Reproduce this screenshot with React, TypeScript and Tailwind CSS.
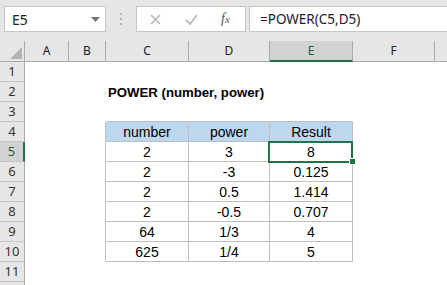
import { Fragment } from 'react';

const cols = [
  { id: 'A', w: 'w-[44px]' },
  { id: 'B', w: 'w-[37px]' },
  { id: 'C', w: 'w-[83px]' },
  { id: 'D', w: 'w-[81px]' },
  { id: 'E', w: 'w-[83px]' },
  { id: 'F', w: 'w-[82px]' },
  { id: '', w: 'w-[60px]' },
];

const table = [
  ['2', '3', '8'],
  ['2', '-3', '0.125'],
  ['2', '0.5', '1.414'],
  ['2', '-0.5', '0.707'],
  ['64', '1/3', '4'],
  ['625', '1/4', '5'],
];

const Cell = ({ w, text, kind, right, bottom, children }: { w: string; text?: string; kind?: 'head' | 'body'; right?: boolean; bottom?: boolean; children?: React.ReactNode }) => (
  <div
    className={`relative ${w} h-[20px] shrink-0 flex items-center justify-center border-r border-b ${
      right ? 'border-r-[#bfbfbf]' : 'border-r-white'
    } ${bottom ? 'border-b-[#bfbfbf]' : 'border-b-white'} ${kind === 'head' ? 'bg-[#bdd7ee]' : 'bg-white'}`}
  >
    <span className="text-[14px] text-black leading-none pt-[1px]">{text}</span>
    {children}
  </div>
);

export default function App() {
  const rows = Array.from({ length: 11 }, (_, i) => i + 1);

  return (
    <div className="w-[447px] h-[285px] overflow-hidden bg-white font-['Liberation_Sans',sans-serif]">
      {/* formula bar */}
      <div className="h-[41px] bg-[#e6e6e6] flex items-start pt-[6px] pl-[4px] gap-0">
        <div className="w-[102px] h-[26px] bg-white border border-[#c6c6c6] flex items-center justify-between pl-[7px] pr-[5px]">
          <span className="text-[14px] text-[#222] font-['Noto_Sans',sans-serif]">E5</span>
          <svg width="9" height="5" viewBox="0 0 9 5"><path d="M0 0h9L4.5 5z" fill="#777" /></svg>
        </div>
        <div className="w-[30px] h-[26px] flex flex-col items-center justify-center gap-[3px]">
          <span className="w-[2px] h-[2px] bg-[#b5b5b5]" />
          <span className="w-[2px] h-[2px] bg-[#b5b5b5]" />
          <span className="w-[2px] h-[2px] bg-[#b5b5b5]" />
        </div>
        <div className="w-[110px] h-[26px] bg-white border border-[#c6c6c6] flex items-center">
          <svg className="ml-[13px]" width="11" height="11" viewBox="0 0 11 11"><path d="M1 1l9 9M10 1l-9 9" stroke="#b8b8b8" strokeWidth="1.5" /></svg>
          <svg className="ml-[24px]" width="13" height="11" viewBox="0 0 13 11"><path d="M1 6l4 4 7-9" stroke="#b8b8b8" strokeWidth="1.8" fill="none" /></svg>
          <span className="ml-[23px] text-[14px] italic text-[#555] font-['Liberation_Serif',serif] leading-none">
            f<span className="text-[11px]">x</span>
          </span>
        </div>
        <div className="ml-[3px] flex-1 h-[26px] bg-white border border-[#c6c6c6] border-r-0 flex items-center pl-[10px]">
          <span className="text-[13.5px] text-[#222] font-['Noto_Sans',sans-serif]">=POWER(C5,D5)</span>
        </div>
      </div>

      {/* column headers */}
      <div className="flex h-[21px] bg-[#e6e6e6] font-['Noto_Sans',sans-serif]">
        <div className="relative w-[25px] h-[21px] shrink-0 border-r border-b border-[#ababab]">
          <svg className="absolute left-[10px] top-[6px]" width="12" height="12" viewBox="0 0 12 12"><path d="M12 0v12H0z" fill="#b4b4b4" /></svg>
        </div>
        {cols.map((c, i) =>
          c.id === 'E' ? (
            <div key={i} className={`${c.w} h-[21px] shrink-0 bg-[#d2d2d2] border-r border-r-[#ababab] border-b-2 border-b-[#217346] flex items-center justify-center text-[12px] text-[#1f5d3b]`}>
              {c.id}
            </div>
          ) : (
            <div key={i} className={`${c.w} h-[21px] shrink-0 border-r border-b border-[#ababab] flex items-center justify-center text-[12px] text-[#222]`}>
              {c.id}
            </div>
          )
        )}
      </div>

      {/* rows */}
      {rows.map((r) => {
        const inTable = r >= 4 && r <= 10;
        const data = r >= 5 && r <= 10 ? table[r - 5] : null;
        return (
          <div key={r} className={`flex h-[20px] relative ${r === 5 ? 'z-10' : ''}`}>
            {r === 5 ? (
              <div className="w-[25px] h-[20px] shrink-0 bg-[#d2d2d2] border-r-2 border-r-[#217346] border-b border-b-[#c6c6c6] flex items-center justify-center text-[13px] text-[#1f5d3b] font-['Noto_Sans',sans-serif]">
                {r}
              </div>
            ) : (
              <div className="w-[25px] h-[20px] shrink-0 bg-[#e6e6e6] border-r border-r-[#ababab] border-b border-b-[#c6c6c6] flex items-center justify-center text-[13px] text-[#333] font-['Noto_Sans',sans-serif]">
                {r}
              </div>
            )}
            <Cell w="w-[44px]" />
            <Cell w="w-[37px]" right={inTable} />
            {r === 2 ? (
              <div className="w-[247px] h-[20px] shrink-0 flex items-center pl-[2px]">
                <span className="whitespace-nowrap text-[13.2px] font-bold text-black leading-none pt-[1px]">
                  POWER (number, power)
                </span>
              </div>
            ) : r === 4 ? (
              <Fragment>
                <Cell w="w-[83px]" kind="head" text="number" right bottom />
                <Cell w="w-[81px]" kind="head" text="power" right bottom />
                <Cell w="w-[83px]" kind="head" text="Result" right bottom />
              </Fragment>
            ) : data ? (
              <Fragment>
                <Cell w="w-[83px]" text={data[0]} right bottom />
                <Cell w="w-[81px]" text={data[1]} right bottom />
                <Cell w="w-[83px]" text={data[2]} right bottom>
                  {r === 5 && (
                    <Fragment>
                      <div className="absolute z-10 -left-[2px] -top-[1px] w-[85px] h-[22px] border-2 border-[#217346]" />
                      <div className="absolute z-20 -right-[4px] -bottom-[4px] w-[7px] h-[7px] bg-[#217346] border border-white" />
                    </Fragment>
                  )}
                </Cell>
              </Fragment>
            ) : (
              <Fragment>
                <Cell w="w-[83px]" bottom={r === 3} />
                <Cell w="w-[81px]" bottom={r === 3} />
                <Cell w="w-[83px]" bottom={r === 3} />
              </Fragment>
            )}
            <Cell w="w-[82px]" />
            <Cell w="w-[60px]" />
          </div>
        );
      })}
      <div className="w-[25px] h-[20px] bg-[#e6e6e6] border-r border-r-[#ababab]" />
    </div>
  );
}
